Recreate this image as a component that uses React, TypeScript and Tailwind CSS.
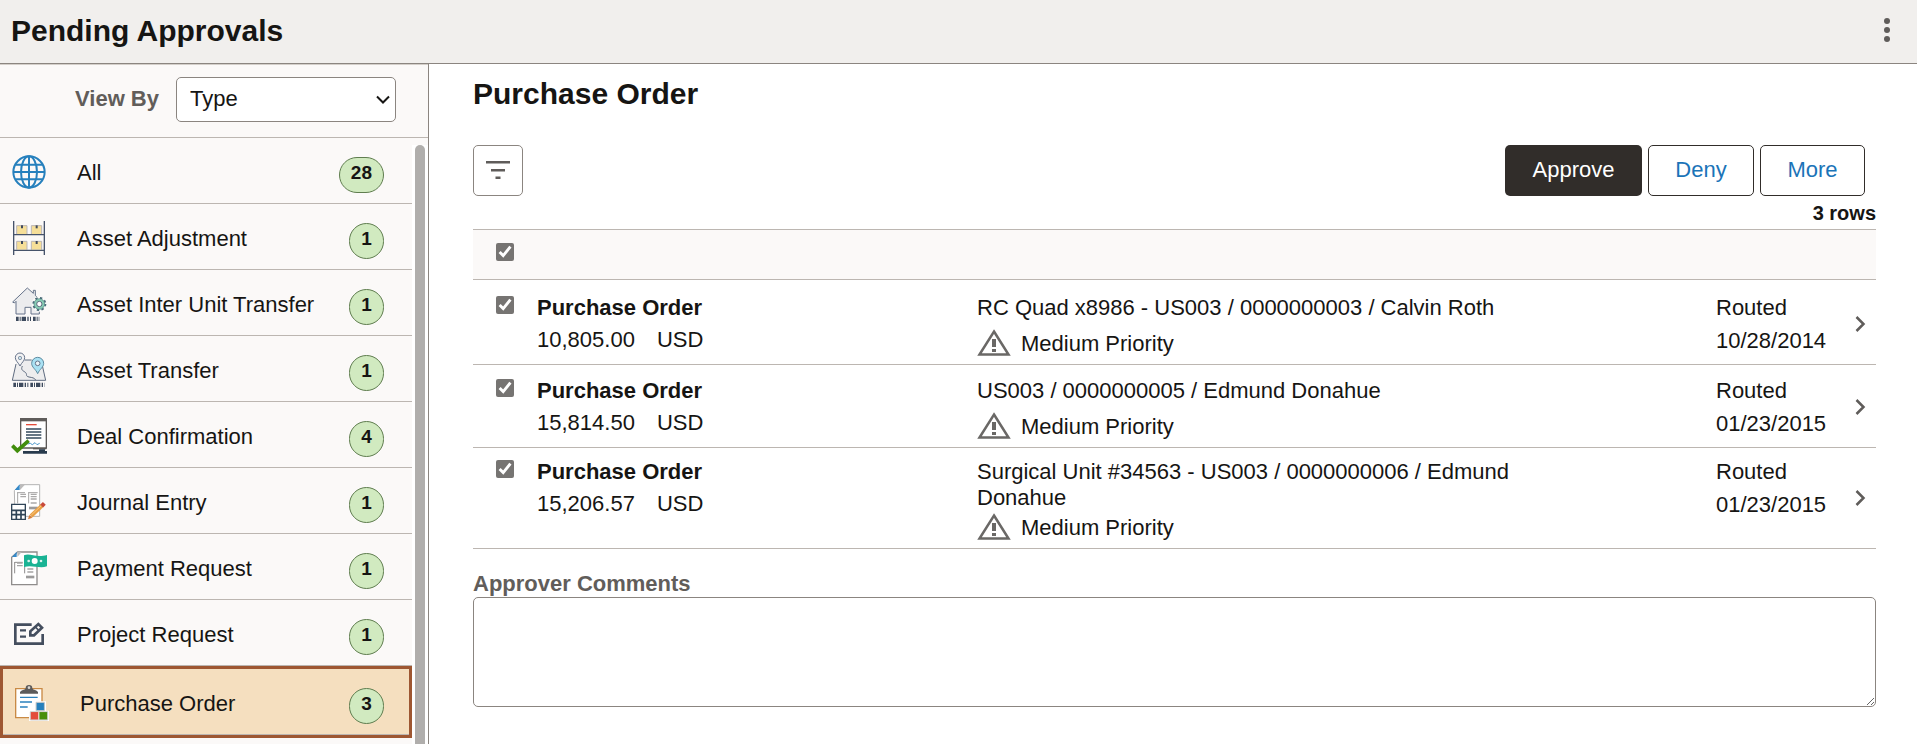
import { useState, type ReactNode } from "react";

function Icon({ children }: { children: ReactNode }) {
  return (
    <svg viewBox="0 0 108 108" className="size-9 shrink-0" fill="none" aria-hidden="true">
      {children}
    </svg>
  );
}

const GlobeIcon = () => (
  <Icon>
    <g stroke="#2680bd" strokeWidth="6">
      <circle cx="54" cy="54" r="47" />
      <ellipse cx="54" cy="54" rx="24" ry="47" />
      <path d="M54 7v94M7 54h94M13 32h82M13 76h82" />
    </g>
  </Icon>
);

const ShelfIcon = () => (
  <Icon>
    {[17, 61].map((x) =>
      [16, 63].map((y) => (
        <g key={`${x}-${y}`}>
          <path d={`M${x} ${y}h31v26h-31z`} fill="#f6df98" />
          <path d={`M${x} ${y + 26}v-25h31v25`} stroke="#b9b5b8" strokeWidth="3" />
          <path d={`M${x + 16} ${y}v9`} stroke="#3f4a5c" strokeWidth="6" />
        </g>
      )),
    )}
    <path d="M8 3v102M100 3v102" stroke="#46536a" strokeWidth="4" />
    <path d="M8 44h92M8 91h92" stroke="#46536a" strokeWidth="4" />
  </Icon>
);

const Barcode = ({ x, width }: { x: number; width: number }) => (
  <path
    d={`M${x} 98.500h${width}`}
    stroke="#3d4a5d"
    strokeWidth="13"
    strokeDasharray="8 3 3 3 13 4 4 4 3 6"
  />
);

const HouseIcon = () => (
  <Icon>
    <path
      d="M5 48L49 6l18 16v-9h6v15l12 13v43H60V64H42v20H15V46l-5 5z"
      fill="#ececee"
      stroke="#66738a"
      strokeWidth="3"
    />
    <circle cx="85" cy="54" r="23" fill="#fbfaf9" />
    <circle cx="85" cy="54" r="18" stroke="#4b6b78" strokeWidth="6" strokeDasharray="7 7.100" />
    <circle cx="85" cy="54" r="16" fill="#87cdb4" stroke="#4b7b80" strokeWidth="2" />
    <circle cx="85" cy="54" r="8" fill="#fff" stroke="#5d6b7f" strokeWidth="3" />
    <Barcode x={15} width={70} />
  </Icon>
);

const MapIcon = () => (
  <Icon>
    <path d="M15 33L4 85h100L94 36 62 24H38z" fill="#ededee" />
    <path
      d="M15 36L4 85h100L95 45M41 24h21M34 42c-6 14 4 14 10 20 6 7-2 10 10 13 10 2 16 2 20 9"
      stroke="#5f6c80"
      strokeWidth="3"
    />
    <path
      d="M27 42C22 31 13 27 13 17a14 14 0 0 1 28 0c0 10-9 14-14 25z"
      fill="#f3f3f4"
      stroke="#66738a"
      strokeWidth="3"
    />
    <circle cx="27" cy="18" r="5" fill="#c9e4ee" stroke="#66738a" strokeWidth="2" />
    <path
      d="M80 65C74 51 62 46 62 34a18 18 0 0 1 36 0c0 12-12 17-18 31z"
      fill="#a9e1f3"
      stroke="#5d8ba0"
      strokeWidth="3"
    />
    <circle cx="80" cy="34" r="7" fill="#e9f4f8" stroke="#66738a" strokeWidth="3" />
    <Barcode x={7} width={94} />
  </Icon>
);

const DealIcon = () => (
  <Icon>
    <path d="M29 4h77v86H29z" fill="#fff" stroke="#5c5957" strokeWidth="4" />
    <path d="M27 0h81v10H27z" fill="#5f5c5a" />
    <path d="M45 20h32" stroke="#e34c3b" strokeWidth="4" />
    <path d="M45 33h46M45 42h46M45 51h46M45 60h46" stroke="#33495c" strokeWidth="4" />
    <path d="M50 78l8-2 6 4 8-6 6 6 8-4" stroke="#4a97cb" strokeWidth="3" />
    <path d="M66 92h40" stroke="#5c5957" strokeWidth="4" />
    <path d="M36 103h72M84 98h18" stroke="#283b4d" strokeWidth="8" />
    <path d="M4 83l15 15 34-30" stroke="#418d0c" strokeWidth="11" />
  </Icon>
);

const JournalIcon = () => (
  <Icon>
    <path d="M10 20L28 2h58v95H12z" fill="#fff" stroke="#b4b3b3" strokeWidth="3" />
    <path d="M11 18L26 1v17z" fill="#3589c8" />
    <path d="M27 1h16L27 18z" fill="#bcbbbb" />
    <path d="M20 24v34M53 24v34M20 26h22M54 26h26" stroke="#a5a4a4" strokeWidth="3" />
    <path d="M28 31h17M28 38h17M59 31h18M59 38h18M59 45h18M59 57h18" stroke="#aaa9a9" strokeWidth="4" />
    <path d="M54 72h26" stroke="#9b9a9a" strokeWidth="8" />
    <path d="M2 61h41v45H2z" fill="#fff" stroke="#2f4457" strokeWidth="4" />
    <path d="M2 79h41M2 92h41M16 79v27M30 79v27" stroke="#2f4457" strokeWidth="5" />
    <path d="M60 96l34-32" stroke="#e9a046" strokeWidth="12" />
    <path d="M61 93l32-30" stroke="#f7c983" strokeWidth="3" />
    <path d="M92 66l8-8" stroke="#c8493a" strokeWidth="12" />
    <path d="M55 93l9 8-13 5z" fill="#d87b37" />
  </Icon>
);

const PaymentIcon = () => (
  <Icon>
    <path d="M2 22L20 6h58v98H2z" fill="#fff" stroke="#8f8d8c" strokeWidth="4" />
    <path d="M3 21L17 5v16z" fill="#3589c8" />
    <path d="M19 6h13L19 21z" fill="#bcbbbb" />
    <path d="M11 36v34M41 36v34M11 37h24" stroke="#8f8d8c" strokeWidth="3" />
    <path d="M18 39h17M18 47h17M49 57h18M49 66h18" stroke="#a5a4a4" strokeWidth="4" />
    <path d="M45 81h25" stroke="#9b9a9a" strokeWidth="8" />
    <path d="M39 16c18-8 34 8 69-1v34c-22 8-44-5-69 2z" fill="#19b394" />
    <circle cx="71" cy="33" r="9" fill="#fff" />
    <circle cx="53" cy="33" r="4" fill="#d9f3ed" />
    <circle cx="90" cy="33" r="4" fill="#d9f3ed" />
  </Icon>
);

const ProjectIcon = () => (
  <Icon>
    <g stroke="#444e5e" strokeWidth="8">
      <path d="M62 26H13v57h82V54" />
      <path d="M27 43h18M27 62h18" strokeWidth="7" />
      <path d="M58 58V46l24-22 11 11-24 23z" />
      <path d="M72 32l12 12" strokeWidth="5" />
    </g>
  </Icon>
);

const OrderIcon = () => (
  <Icon>
    <path d="M5 11h79v87H5z" fill="#fff" stroke="#c98a45" strokeWidth="4" />
    <path d="M18 26v-5c4-6 14-5 17-11a10 10 0 0 1 20 0c3 6 13 5 17 11v5z" fill="#5c5b5b" />
    <circle cx="45" cy="8" r="4" fill="#d9d6d2" />
    <path d="M18 37h53M18 51h36M18 66h23" stroke="#2b81bd" strokeWidth="4" />
    <path d="M63 49h33v28h9v31H45V78h18z" fill="#fff" />
    <path d="M67 53h24v23H67z" fill="#2680bd" />
    <path d="M50 81h23v23H50z" fill="#e44c3a" />
    <path d="M76 81h24v23H76z" fill="#488f0c" />
    <path d="M49 80h52v25H49zM66 52h25v25H66z" stroke="#b9b6b2" strokeWidth="2" />
  </Icon>
);

const WarningIcon = () => (
  <svg viewBox="0 0 34 27" className="mb-0.5 h-[27px] w-[34px] shrink-0" aria-hidden="true">
    <path d="M17 2.500L31.500 25.500h-29z" fill="none" stroke="#6a6866" strokeWidth="2.500" />
    <path d="M15 10h4v8h-4zM15 20h4v3h-4z" fill="#6a6866" />
  </svg>
);

const categories = [
  { name: "All", count: 28, icon: <GlobeIcon /> },
  { name: "Asset Adjustment", count: 1, icon: <ShelfIcon /> },
  { name: "Asset Inter Unit Transfer", count: 1, icon: <HouseIcon /> },
  { name: "Asset Transfer", count: 1, icon: <MapIcon /> },
  { name: "Deal Confirmation", count: 4, icon: <DealIcon /> },
  { name: "Journal Entry", count: 1, icon: <JournalIcon /> },
  { name: "Payment Request", count: 1, icon: <PaymentIcon /> },
  { name: "Project Request", count: 1, icon: <ProjectIcon /> },
  { name: "Purchase Order", count: 3, icon: <OrderIcon /> },
];

const orders = [
  { id: "0000000003", amount: "10,805.00", title: "RC Quad x8986 - US003 / 0000000003 / Calvin Roth", date: "10/28/2014" },
  { id: "0000000005", amount: "15,814.50", title: "US003 / 0000000005 / Edmund Donahue", date: "01/23/2015" },
  { id: "0000000006", amount: "15,206.57", title: "Surgical Unit #34563 - US003 / 0000000006 / Edmund Donahue", date: "01/23/2015" },
];

function Sidebar() {
  const [active, setActive] = useState("Purchase Order");

  return (
    <aside className="flex w-[429px] shrink-0 flex-col border-r border-[#8b8580] bg-[#fbf9f8]">
      <div className="flex h-[74px] shrink-0 items-center justify-end gap-[17px] border-t border-b border-t-[#d4cfca] border-b-[#bcb6b1] pr-8 pb-2">
        <label htmlFor="view-by" className="mt-[3px] font-bold text-[#615d5a]">
          View By
        </label>
        <div className="relative mt-1">
          <select
            id="view-by"
            className="h-[45px] w-[220px] appearance-none rounded-[5px] border border-[#8b8580] bg-white pb-px pl-[13px] text-[#161513]"
          >
            <option>Type</option>
          </select>
          <svg
            viewBox="0 0 14 9"
            className="pointer-events-none absolute top-[18px] right-1.5 h-[9px] w-3.5"
            fill="none"
            stroke="#161513"
            strokeWidth="2"
            aria-hidden="true"
          >
            <path d="M1 1.500l6 6 6-6" />
          </svg>
        </div>
      </div>

      <div className="flex min-h-0 flex-1">
        <nav className="min-w-0 flex-1 overflow-hidden">
          {categories.map(({ name, count, icon }) => (
            <button
              key={name}
              type="button"
              onClick={() => setActive(name)}
              className={`block w-full text-left ${active === name ? "border-[3px] border-[#9e5732] bg-[#f5dfbf]" : ""}`}
            >
              <span
                className={`flex h-[66px] items-center border-b border-[#bcb6b1] pt-[3px] pl-[11px] ${
                  active === name ? "pr-[25px]" : "pr-7"
                }`}
              >
                {icon}
                <span className="mt-0.5 ml-[30px] flex-1">{name}</span>
                <span className="mt-[5px] flex h-9 min-w-[35px] items-center justify-center rounded-full border border-[#5f7d4f] bg-[#d1eac0] px-[11px] pb-[3px] text-[19px] font-bold">
                  {count}
                </span>
              </span>
            </button>
          ))}
        </nav>
        <div className="mt-[7px] w-4 bg-white pl-[3px]">
          <div className="h-full w-2.5 rounded-t-full bg-[#b0aeac]" />
        </div>
      </div>
    </aside>
  );
}

function OrderTable() {
  const [selected, setSelected] = useState(orders.map((o) => o.id));

  const toggle = (id: string) =>
    setSelected((prev) => (prev.includes(id) ? prev.filter((x) => x !== id) : [...prev, id]));

  return (
    <table className="w-full table-fixed border-collapse text-left">
      <thead>
        <tr className="h-[50px] border-y border-[#bcb6b1] bg-[#fbf9f8] align-top">
          <th className="w-16 pt-[13px] pl-[23px]">
            <input
              type="checkbox"
              aria-label="Select all rows"
              checked={selected.length === orders.length}
              onChange={(e) => setSelected(e.target.checked ? orders.map((o) => o.id) : [])}
              className="block size-[18px] accent-[#767472]"
            />
          </th>
          <th className="w-[440px]" />
          <th />
          <th className="w-[120px]" />
          <th className="w-10" />
        </tr>
      </thead>
      <tbody>
        {orders.map((order) => (
          <tr
            key={order.id}
            className="border-b border-[#bcb6b1] align-top *:pt-[13px] *:pb-[7px] first:*:pt-[15px] last:*:pt-[11px]"
          >
            <td className="pl-[23px]">
              <input
                type="checkbox"
                aria-label={`Select ${order.title}`}
                checked={selected.includes(order.id)}
                onChange={() => toggle(order.id)}
                className="mt-px block size-[18px] accent-[#767472]"
              />
            </td>
            <td>
              <p className="font-bold">Purchase Order</p>
              <p className="mt-1.5 flex gap-[22px]">
                <span>{order.amount}</span>
                <span>USD</span>
              </p>
            </td>
            <td>
              <p className="min-h-8 max-w-[560px]">{order.title}</p>
              <p className="mt-[3px] flex h-[27px] items-center gap-2.5">
                <WarningIcon />
                <span>Medium Priority</span>
              </p>
            </td>
            <td>
              <p>Routed</p>
              <p className="mt-[7px]">{order.date}</p>
            </td>
            <td className="align-middle">
              <button type="button" aria-label={`Open ${order.title}`} className="ml-[19px] block pb-1">
                <svg viewBox="0 0 11 16" className="h-4 w-[11px]" fill="none" stroke="#5f5c5a" strokeWidth="2.500" aria-hidden="true">
                  <path d="M1.500 1l7 7-7 7" />
                </svg>
              </button>
            </td>
          </tr>
        ))}
      </tbody>
    </table>
  );
}

export default function App() {
  return (
    <div className="flex h-screen flex-col overflow-hidden bg-white font-['Liberation_Sans',Arial,sans-serif] text-[22px] leading-[26px] text-[#161513]">
      <header className="flex h-16 shrink-0 items-center justify-between border-b border-[#8b8580] bg-[#f1efed] pr-[22px] pl-[11px]">
        <h1 className="pb-0.5 text-[30px] leading-9 font-bold">Pending Approvals</h1>
        <button type="button" aria-label="Actions" className="pb-0.5">
          <svg viewBox="0 0 16 28" className="h-7 w-4" fill="#5f5c5a" aria-hidden="true">
            <circle cx="8" cy="4" r="3" />
            <circle cx="8" cy="13" r="3" />
            <circle cx="8" cy="22" r="3" />
          </svg>
        </button>
      </header>

      <div className="flex min-h-0 flex-1">
        <Sidebar />

        <main className="min-w-0 flex-1 pt-3 pr-[41px] pl-11">
          <h2 className="text-[30px] leading-9 font-bold">Purchase Order</h2>

          <div className="mt-[33px] flex h-[51px] justify-between">
            <button
              type="button"
              aria-label="Filter"
              className="flex w-[50px] items-center justify-center rounded-[5px] border border-[#8b8580] pb-0.5"
            >
              <svg viewBox="0 0 24 18" className="h-[18px] w-6" fill="#5f5c5a" aria-hidden="true">
                <path d="M0 0h24v2.500H0zM5 8h14v2.500H5zM9.500 15.500h5V18h-5z" />
              </svg>
            </button>
            <div className="mr-[11px] flex gap-1.5">
              <button type="button" className="w-[137px] rounded-[5px] bg-[#312d2a] pb-px text-white">
                Approve
              </button>
              <button type="button" className="w-[106px] rounded-[5px] border border-[#312d2a] pb-px text-[#1b74b8]">
                Deny
              </button>
              <button type="button" className="w-[105px] rounded-[5px] border border-[#312d2a] pb-px text-[#1b74b8]">
                More
              </button>
            </div>
          </div>

          <p className="mt-[5px] mb-1 text-right text-xl leading-6 font-bold">3 rows</p>

          <OrderTable />

          <label htmlFor="comments" className="mt-[22px] block font-bold text-[#615d5a]">
            Approver Comments
          </label>
          <textarea id="comments" className="block h-[110px] w-full resize rounded-[5px] border border-[#8b8580] p-2" />
        </main>
      </div>
    </div>
  );
}
